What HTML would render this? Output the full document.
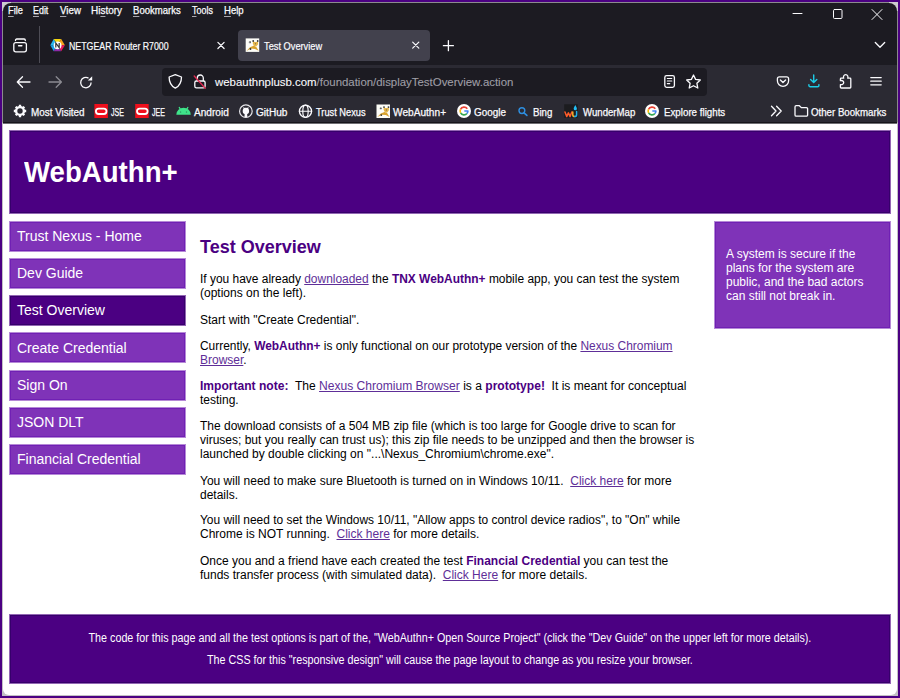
<!DOCTYPE html>
<html><head><meta charset="utf-8">
<style>
*{margin:0;padding:0;box-sizing:border-box}
html,body{width:900px;height:698px;overflow:hidden;background:#4b0082;font-family:"Liberation Sans",sans-serif;position:relative}
div,span,p,h2{position:absolute;white-space:nowrap}
span.s,b,a,i{position:static}
#win{left:2px;top:2px;width:896px;height:694px;background:linear-gradient(#8c8b8e 0,#8c8b8e 120px,#c2c1c4 121px)}
#cl{left:2px;top:2px;width:9px;height:9px;background:#cdcccf}
#cr{left:889px;top:2px;width:9px;height:9px;background:#cdcccf}
#content{left:3px;top:124px;width:894px;height:571px;background:#fff;border-radius:0 0 6px 6px}
#top{left:3px;top:3px;width:894px;height:62px;background:#1c1b22;border-radius:8px 8px 0 0}
#nav{left:3px;top:65px;width:894px;height:57px;background:#2b2a33}
#bmline{left:3px;top:122px;width:894px;height:1px;background:#16151a}
#bmline2{left:3px;top:123px;width:894px;height:1px;background:#6f6e73}
.m{top:5px;color:#fbfbfe;font-size:11px;line-height:13px}
.u{text-decoration:underline;text-underline-offset:2px}
.t{color:#fbfbfe;font-size:11px;line-height:13px}
.ct{color:#fbfbfe;transform-origin:0 0;-webkit-text-stroke:0.25px #fbfbfe}
.ct u{text-decoration:underline;text-underline-offset:1.5px;text-decoration-color:#a9a8b0}
svg{position:absolute;overflow:visible}
/* page */
.box{border:1px solid rgba(75,0,130,0.6);box-shadow:inset 0 0 0 1px #36006b;background:#4b0082;background-clip:padding-box}
.lbox{border:1px solid rgba(120,40,180,0.55);box-shadow:inset 0 0 0 1px #7020b4;background:#7f33b8;background-clip:padding-box}
#hdr{left:9px;top:130px;width:882px;height:84px}
#hdr div{left:13.5px;top:24px;font-size:29px;line-height:34px;font-weight:bold;color:#fff;transform:scaleX(0.952);transform-origin:0 0}
.btn{left:9px;width:177px;height:31px;color:#fff;font-size:14px;line-height:29px;padding-left:7px}
#aside{left:714px;top:221px;width:177px;height:108px;color:#fff;font-size:12px;line-height:14px;padding:25px 0 0 11px;white-space:normal}
#main{left:200px;top:0px;color:#000;font-size:12px;line-height:14px}
#main p{left:0}
#main b{color:#4b0082}
#main a{color:#5e2e98;text-decoration:underline}
h2{left:0;font-size:18px;line-height:20px;color:#4b0082;font-weight:bold}
#foot{left:9px;top:614px;width:882px;height:70px;color:#fff;font-size:12px}
#foot div{left:0;width:880px;text-align:center;line-height:14px;transform:scaleX(0.895);transform-origin:439.5px 0}
</style></head><body>
<div id="win"></div><div id="cl"></div><div id="cr"></div><div id="content"></div>
<div id="top"></div>
<div id="nav"></div>
<div id="bmline"></div><div id="bmline2"></div>
<!-- tab strip -->
<div style="left:39px;top:26px;width:1px;height:37px;background:#4d4c55"></div>
<div style="left:238px;top:30px;width:192px;height:31px;background:#42414d;border-radius:4px"></div>
<div style="left:162px;top:68px;width:545px;height:28px;background:#1c1b22;border-radius:4px"></div>
<div class="ct" style="left:7.80px;top:4px;font-size:10.5px;line-height:13.5px;transform:scaleX(0.8824);-webkit-text-stroke-width:0.25px"><u>F</u>ile</div>
<div class="ct" style="left:33.30px;top:4px;font-size:10.5px;line-height:13.5px;transform:scaleX(0.8474);-webkit-text-stroke-width:0.25px"><u>E</u>dit</div>
<div class="ct" style="left:59.70px;top:4px;font-size:10.5px;line-height:13.5px;transform:scaleX(0.9261);-webkit-text-stroke-width:0.25px"><u>V</u>iew</div>
<div class="ct" style="left:90.70px;top:4px;font-size:10.5px;line-height:13.5px;transform:scaleX(0.9515);-webkit-text-stroke-width:0.25px">Hi<u>s</u>tory</div>
<div class="ct" style="left:132.80px;top:4px;font-size:10.5px;line-height:13.5px;transform:scaleX(0.9094);-webkit-text-stroke-width:0.25px"><u>B</u>ookmarks</div>
<div class="ct" style="left:191.70px;top:4px;font-size:10.5px;line-height:13.5px;transform:scaleX(0.8520);-webkit-text-stroke-width:0.25px"><u>T</u>ools</div>
<div class="ct" style="left:224.00px;top:4px;font-size:10.5px;line-height:13.5px;transform:scaleX(0.9091);-webkit-text-stroke-width:0.25px"><u>H</u>elp</div>
<div class="ct" style="left:69.00px;top:40px;font-size:10.7px;line-height:13.7px;transform:scaleX(0.8223);-webkit-text-stroke-width:0.2px">NETGEAR Router R7000</div>
<div class="ct" style="left:263.90px;top:40px;font-size:10.7px;line-height:13.7px;transform:scaleX(0.8662);-webkit-text-stroke-width:0.2px">Test Overview</div>
<div class="ct" style="left:215.30px;top:75px;font-size:11.5px;line-height:14.5px;transform:scaleX(0.9930);-webkit-text-stroke-width:0.1px">webauthnplusb.com<span class="s" style="color:#9f9ea6;-webkit-text-stroke-color:#9f9ea6">/foundation/displayTestOverview.action</span></div>
<div class="ct" style="left:30.70px;top:106px;font-size:10px;line-height:13px;transform:scaleX(0.9870);-webkit-text-stroke-width:0.25px">Most Visited</div>
<div class="ct" style="left:111.30px;top:106px;font-size:10px;line-height:13px;transform:scaleX(0.7053);-webkit-text-stroke-width:0.25px">JSE</div>
<div class="ct" style="left:152.20px;top:106px;font-size:10px;line-height:13px;transform:scaleX(0.7053);-webkit-text-stroke-width:0.25px">JEE</div>
<div class="ct" style="left:194.00px;top:106px;font-size:10px;line-height:13px;transform:scaleX(1.0086);-webkit-text-stroke-width:0.25px">Android</div>
<div class="ct" style="left:256.00px;top:106px;font-size:10px;line-height:13px;transform:scaleX(1.0097);-webkit-text-stroke-width:0.25px">GitHub</div>
<div class="ct" style="left:316.00px;top:106px;font-size:10px;line-height:13px;transform:scaleX(0.9259);-webkit-text-stroke-width:0.25px">Trust Nexus</div>
<div class="ct" style="left:393.30px;top:106px;font-size:10px;line-height:13px;transform:scaleX(1.0135);-webkit-text-stroke-width:0.25px">WebAuthn+</div>
<div class="ct" style="left:474.30px;top:106px;font-size:10px;line-height:13px;transform:scaleX(0.9906);-webkit-text-stroke-width:0.25px">Google</div>
<div class="ct" style="left:533.30px;top:106px;font-size:10px;line-height:13px;transform:scaleX(0.9700);-webkit-text-stroke-width:0.25px">Bing</div>
<div class="ct" style="left:583.00px;top:106px;font-size:10px;line-height:13px;transform:scaleX(0.9630);-webkit-text-stroke-width:0.25px">WunderMap</div>
<div class="ct" style="left:663.60px;top:106px;font-size:10px;line-height:13px;transform:scaleX(0.9746);-webkit-text-stroke-width:0.25px">Explore flights</div>
<div class="ct" style="left:811.00px;top:106px;font-size:10px;line-height:13px;transform:scaleX(0.9679);-webkit-text-stroke-width:0.25px">Other Bookmarks</div>
<svg width="900" height="130" style="left:0;top:0" viewBox="0 0 900 130" fill="none" stroke="#fbfbfe" stroke-width="1.3" stroke-linecap="round" stroke-linejoin="round">
  <!-- window controls -->
  <line x1="793" y1="13.5" x2="802" y2="13.5" stroke-width="1"/>
  <rect x="833.5" y="9.5" width="8.5" height="9" rx="1" stroke-width="1"/>
  <path d="M872 9.5 L882 19.5 M882 9.5 L872 19.5" stroke-width="1"/>
  <!-- tab list icon -->
  <path d="M15.5 40.5 v-0.3 a1.2 1.2 0 0 1 1.2 -1.2 h7.4 a1.2 1.2 0 0 1 1.2 1.2 v0.3"/>
  <rect x="13.8" y="42.6" width="12.6" height="9.2" rx="2"/>
  <line x1="18.6" y1="45.8" x2="21.8" y2="45.8" stroke-width="1.5"/>
  <!-- netgear icon -->
  <g stroke="none">
    <polygon points="57.5,45 50.3,45.2 53.7,38.9" fill="#2ab7ef"/>
    <polygon points="57.5,45 50.3,45.2 53.7,51.2" fill="#1aa2e6"/>
    <polygon points="57.5,45 53.7,38.9 61.2,38.9" fill="#f5d40f"/>
    <polygon points="57.5,45 61.2,38.9 64.9,45.2" fill="#f7a21b"/>
    <polygon points="57.5,45 64.9,45.2 61.2,51.2" fill="#ea1a5a"/>
    <polygon points="57.5,45 61.2,51.2 53.7,51.2" fill="#8d2aa6"/>
    <circle cx="57.6" cy="45.3" r="3.9" fill="#fff"/>
    <path d="M55.8 47.6 V43 L59.2 47.6 V43" stroke="#333" stroke-width="1.2" fill="none" stroke-linecap="butt" stroke-linejoin="miter"/>
  </g>
  <!-- close tab 1 -->
  <path d="M217.9 42.3 L224.1 48.5 M224.1 42.3 L217.9 48.5" stroke-width="1.2"/>
  <!-- tomcat favicon -->
  <g transform="translate(245.7,38.4)"><rect width="13.5" height="13.5" fill="#fdfdf8" stroke="none"/>
    <g stroke="none">
    <path d="M3 4.5 C2.5 3.5 3.3 2.6 4.2 3 L5.5 4.2 L4.5 5.5 Z" fill="#c9c9c9"/>
    <polygon points="7.2,2.4 8.6,3.6 11,3.6 12.3,2.4 12.4,5.8 10.5,8.2 8.2,7.6 7.1,5.2" fill="#e6b74c"/>
    <polygon points="0.8,12.6 4.3,8.9 8,7.4 10.6,8.6 13,12.4 9.3,10.6 5.2,10.2" fill="#d9a22c"/>
    <circle cx="7.5" cy="2.6" r="0.9" fill="#3a3a3a"/>
    <circle cx="12" cy="2.6" r="0.9" fill="#3a3a3a"/>
    <circle cx="9.8" cy="5.4" r="0.55" fill="#555"/>
    <circle cx="4.4" cy="3.7" r="0.8" fill="#333"/>
    <circle cx="4.8" cy="10.6" r="0.9" fill="#333"/>
    </g></g>
  <!-- close tab 2 -->
  <path d="M412.7 42.1 L418.8 48.2 M418.8 42.1 L412.7 48.2" stroke-width="1.2"/>
  <!-- new tab + -->
  <path d="M448.4 40.7 V50.7 M443.4 45.7 H453.4" stroke-width="1.3"/>
  <!-- chevron -->
  <path d="M875.3 42.5 L880 47.3 L884.7 42.5" stroke-width="1.3"/>
  <!-- back -->
  <path d="M30 82 H17.5 M22.5 76.8 L17.3 82 L22.5 87.2" stroke-width="1.3"/>
  <!-- forward -->
  <path d="M49 82 H61.3 M56.2 76.8 L61.4 82 L56.2 87.2" stroke="#8c8b92" stroke-width="1.3"/>
  <!-- reload -->
  <path d="M88.5 78.1 A5.2 5.2 0 1 0 91.1 82.6" stroke-width="1.3" stroke-linecap="butt"/>
  <polygon points="87.8,80.6 92.2,80.6 92.2,76.2" fill="#fbfbfe" stroke="none"/>
  <!-- shield -->
  <path d="M175.3 74.7 L181.5 77 C181.5 82.5 179.5 86 175.3 88.2 C171.1 86 169.1 82.5 169.1 77 Z" stroke-width="1.3"/>
  <!-- lock crossed -->
  <path d="M197.3 80.5 V78 A3 3 0 0 1 203.3 78 V80.5" stroke-width="1.3"/>
  <rect x="194.8" y="81" width="10.3" height="6.8" rx="1.6" stroke-width="1.3"/>
  <line x1="194.2" y1="76" x2="205.2" y2="88.3" stroke="#e22850" stroke-width="1.3"/>
  <!-- reader -->
  <rect x="664.8" y="75.6" width="9.6" height="11.8" rx="1.8" stroke-width="1.3"/>
  <path d="M667.3 78.5 H671.8 M667.3 81 H671.8 M667.3 83.6 H669.8" stroke-width="1.1"/>
  <!-- star -->
  <path d="M693.5 75 L695.6 79.4 L700.3 80 L696.9 83.3 L697.8 88 L693.5 85.7 L689.2 88 L690.1 83.3 L686.7 80 L691.4 79.4 Z" stroke-width="1.3"/>
  <!-- pocket -->
  <path d="M779.4 76.8 H786.6 A2 2 0 0 1 788.6 78.8 V80.8 A5.6 5.6 0 0 1 777.4 80.8 V78.8 A2 2 0 0 1 779.4 76.8 Z" stroke-width="1.3"/>
  <path d="M780.4 79.9 L783 82.4 L785.6 79.9" stroke-width="1.4"/>
  <!-- download -->
  <path d="M813.7 75 V82.3 M810.6 79.4 L813.7 82.5 L816.8 79.4 M808.9 84.6 V85.4 A1.3 1.3 0 0 0 810.2 86.7 H817.6 A1.3 1.3 0 0 0 818.9 85.4 V84.6" stroke="#1ccbe6" stroke-width="1.45"/>
  <!-- extensions puzzle -->
  <path d="M843.7 78.2 C843 76.8 843.7 74.7 845.7 74.7 C847.7 74.7 848.4 76.8 847.7 78.2 H850 A0.8 0.8 0 0 1 850.8 79 V87.2 A0.8 0.8 0 0 1 850 88 H841.2 A0.8 0.8 0 0 1 840.4 87.2 V84.6 C842.2 85 843.7 84 843.7 82.6 C843.7 81.2 842.2 80.2 840.4 80.6 V79 A0.8 0.8 0 0 1 841.2 78.2 Z" stroke-width="1.3"/>
  <!-- menu -->
  <path d="M870.8 77.6 H881.2 M870.8 81.2 H881.2 M870.8 84.8 H881.2" stroke-width="1.3"/>
  <!-- bookmarks: gear -->
  <g transform="translate(20,111)">
    <circle r="3.9" stroke-width="2.4"/>
    <path d="M0 -6.2 V-4 M0 6.2 V4 M-6.2 0 H-4 M6.2 0 H4 M-4.3 -4.3 L-2.9 -2.9 M4.3 4.3 L2.9 2.9 M-4.3 4.3 L-2.9 2.9 M4.3 -4.3 L2.9 -2.9" stroke-width="2.3" stroke-linecap="butt"/>
    <circle r="1.9" fill="#2b2a33" stroke="none"/>
  </g>
  <!-- JSE -->
  <rect x="94.4" y="104" width="13.5" height="14" fill="#ee0f1c" stroke="none"/>
  <rect x="95.9" y="108.6" width="10.6" height="5.4" rx="2.7" stroke="#fff" stroke-width="1.8"/>
  <rect x="135.2" y="104" width="13.5" height="14" fill="#ee0f1c" stroke="none"/>
  <rect x="137" y="108.6" width="10.6" height="5.4" rx="2.7" stroke="#fff" stroke-width="1.8"/>
  <!-- android -->
  <path d="M176.3 114.8 A7.25 7 0 0 1 190.8 114.8 Z" fill="#3fe48a" stroke="none"/>
  <path d="M179.2 107.4 L180.5 109.3 M187.9 107.4 L186.6 109.3" stroke="#3fe48a" stroke-width="1.2"/>
  <ellipse cx="180.6" cy="112" rx="0.7" ry="0.85" fill="#2f9a62" stroke="none"/>
  <ellipse cx="186.5" cy="112" rx="0.7" ry="0.85" fill="#2f9a62" stroke="none"/>
  <!-- github -->
  <circle cx="245.9" cy="111.2" r="6.3" stroke="#e6e6ea" stroke-width="1.2"/>
  <path transform="translate(245.9,111.2)" d="M -3.2 0 C -3.2 -1.3 -2.8 -2 -2.4 -2.4 L -2.6 -4.1 L -1.1 -3.3 C -0.4 -3.5 0.4 -3.5 1.1 -3.3 L 2.6 -4.1 L 2.4 -2.4 C 2.8 -2 3.2 -1.3 3.2 0 C 3.2 1.7 2.2 2.6 1.3 2.8 L 1.4 6 H -1.4 L -1.3 2.8 C -2.2 2.6 -3.2 1.7 -3.2 0 Z" fill="#fbfbfe" stroke="none"/>
  <!-- globe -->
  <circle cx="305.5" cy="111.25" r="6.1" stroke-width="1.3"/>
  <ellipse cx="305.5" cy="111.25" rx="2.7" ry="6.1" stroke-width="1.2"/>
  <path d="M299.4 111.25 H311.6" stroke-width="1.2"/>
  <!-- webauthn favicon -->
  <g transform="translate(376.5,104.5)"><rect width="13.5" height="13.5" fill="#fdfdf8" stroke="none"/>
    <g stroke="none">
    <path d="M3 4.5 C2.5 3.5 3.3 2.6 4.2 3 L5.5 4.2 L4.5 5.5 Z" fill="#c9c9c9"/>
    <polygon points="7.2,2.4 8.6,3.6 11,3.6 12.3,2.4 12.4,5.8 10.5,8.2 8.2,7.6 7.1,5.2" fill="#e6b74c"/>
    <polygon points="0.8,12.6 4.3,8.9 8,7.4 10.6,8.6 13,12.4 9.3,10.6 5.2,10.2" fill="#d9a22c"/>
    <circle cx="7.5" cy="2.6" r="0.9" fill="#3a3a3a"/>
    <circle cx="12" cy="2.6" r="0.9" fill="#3a3a3a"/>
    <circle cx="9.8" cy="5.4" r="0.55" fill="#555"/>
    <circle cx="4.4" cy="3.7" r="0.8" fill="#333"/>
    <circle cx="4.8" cy="10.6" r="0.9" fill="#333"/>
    </g></g>
  <!-- google G -->
  <g transform="translate(464,111)">
    <circle r="7" fill="#fff" stroke="none"/>
    <path d="M4.4 -0.6 H0.2 V1.2 H2.7 C2.4 2.5 1.4 3.2 0 3.2 A3.2 3.2 0 0 1 0 -3.2 C0.8 -3.2 1.5 -2.9 2 -2.4" stroke="none" fill="none"/>
    <path d="M3.3 -2.2 A3.9 3.9 0 0 0 -3.5 -1.6" stroke="#ea4335" stroke-width="1.6" stroke-linecap="butt"/>
    <path d="M-3.5 -1.6 A3.9 3.9 0 0 0 -3.4 1.9" stroke="#fbbc05" stroke-width="1.6" stroke-linecap="butt"/>
    <path d="M-3.4 1.9 A3.9 3.9 0 0 0 3 2.5" stroke="#34a853" stroke-width="1.6" stroke-linecap="butt"/>
    <path d="M3 2.5 A3.9 3.9 0 0 0 3.9 0 H0.3" stroke="#4285f4" stroke-width="1.6" stroke-linecap="butt"/>
  </g>
  <!-- bing magnifier -->
  <circle cx="521.9" cy="110.6" r="2.9" stroke="#2e8fe0" stroke-width="1.4"/>
  <line x1="524" y1="112.8" x2="526.9" y2="115.4" stroke="#2e8fe0" stroke-width="1.6"/>
  <!-- wundermap -->
  <rect x="564.2" y="104.3" width="13.6" height="13.6" fill="#1c1c1f" stroke="none"/>
  <path d="M565 111.9 L566.7 116.6 L568.4 112.9 L570.1 116.6 L571.8 111.9" stroke="#ff5c2b" stroke-width="1.5"/>
  <path d="M572.8 111.9 V114.7 A1.9 1.9 0 0 0 574.7 116.6" stroke="#f5b02a" stroke-width="1.5"/>
  <path d="M574.7 116.6 A1.9 1.9 0 0 0 576.6 114.7 V111.6" stroke="#1fb0ee" stroke-width="1.5"/>
  <path d="M575.3 104.9 C576.3 106.6 576.9 107.7 576.9 108.7 A1.6 1.6 0 0 1 573.7 108.7 C573.7 107.7 574.3 106.6 575.3 104.9 Z" fill="#22bdf5" stroke="none"/>
  <!-- google 2 -->
  <g transform="translate(652,111)">
    <circle r="7" fill="#fff" stroke="none"/>
    <path d="M3.3 -2.2 A3.9 3.9 0 0 0 -3.5 -1.6" stroke="#ea4335" stroke-width="1.6" stroke-linecap="butt"/>
    <path d="M-3.5 -1.6 A3.9 3.9 0 0 0 -3.4 1.9" stroke="#fbbc05" stroke-width="1.6" stroke-linecap="butt"/>
    <path d="M-3.4 1.9 A3.9 3.9 0 0 0 3 2.5" stroke="#34a853" stroke-width="1.6" stroke-linecap="butt"/>
    <path d="M3 2.5 A3.9 3.9 0 0 0 3.9 0 H0.3" stroke="#4285f4" stroke-width="1.6" stroke-linecap="butt"/>
  </g>
  <!-- chevrons >> -->
  <path d="M771.5 106.2 L776 111 L771.5 115.8 M776.6 106.2 L781.2 111 L776.6 115.8" stroke-width="1.3"/>
  <!-- folder -->
  <path d="M795 106.9 A1.2 1.2 0 0 1 796.2 105.7 H799.4 L801.3 107.6 H806.4 A1.2 1.2 0 0 1 807.6 108.8 V115 A1.2 1.2 0 0 1 806.4 116.2 H796.2 A1.2 1.2 0 0 1 795 115 Z" stroke-width="1.3"/>
</svg>

<!-- page header -->
<div id="hdr" class="box"><div>WebAuthn+</div></div>
<div class="btn lbox" style="top:221px">Trust Nexus - Home</div>
<div class="btn lbox" style="top:258px">Dev Guide</div>
<div class="btn box" style="top:295px">Test Overview</div>
<div class="btn lbox" style="top:332px;line-height:31px">Create Credential</div>
<div class="btn lbox" style="top:370px">Sign On</div>
<div class="btn lbox" style="top:407px">JSON DLT</div>
<div class="btn lbox" style="top:444px">Financial Credential</div>

<div id="aside" class="lbox">A system is secure if the<br>plans for the system are<br>public, and the bad actors<br>can still not break in.</div>

<div id="main">
<h2 style="top:237px">Test Overview</h2>
<p style="top:272px"><span class="s" style="display:inline-block;transform:scaleX(0.9952);transform-origin:0 0">If you have already <a>downloaded</a> the <b>TNX WebAuthn+</b> mobile app, you can test the system</span><br>(options on the left).</p>
<p style="top:313px">Start with "Create Credential".</p>
<p style="top:339px"><span class="s" style="display:inline-block;transform:scaleX(0.9939);transform-origin:0 0">Currently, <b>WebAuthn+</b> is only functional on our prototype version of the <a>Nexus Chromium</span><br>Browser</a>.</p>
<p style="top:379px"><span class="s" style="display:inline-block;transform:scaleX(1.0050);transform-origin:0 0"><b>Important note:</b>&nbsp; The <a>Nexus Chromium Browser</a> is a <b>prototype!</b>&nbsp; It is meant for conceptual</span><br>testing.</p>
<p style="top:419px">The download consists of a 504 MB zip file (which is too large for Google drive to scan for<br>viruses; but you really can trust us); this zip file needs to be unzipped and then the browser is<br>launched by double clicking on "...\Nexus_Chromium\chrome.exe".</p>
<p style="top:474px">You will need to make sure Bluetooth is turned on in Windows 10/11.&nbsp; <a>Click here</a> for more<br>details.</p>
<p style="top:513px"><span class="s" style="display:inline-block;transform:scaleX(0.9946);transform-origin:0 0">You will need to set the Windows 10/11, "Allow apps to control device radios", to "On" while</span><br>Chrome is NOT running.&nbsp; <a>Click here</a> for more details.</p>
<p style="top:554px">Once you and a friend have each created the test <b>Financial Credential</b> you can test the<br>funds transfer process (with simulated data).&nbsp; <a>Click Here</a> for more details.</p>
</div>

<div id="foot" class="box">
<div style="top:16px">The code for this page and all the test options is part of the, "WebAuthn+ Open Source Project" (click the "Dev Guide" on the upper left for more details).</div>
<div style="top:38px">The CSS for this "responsive design" will cause the page layout to change as you resize your browser.</div>
</div>
</body></html>
